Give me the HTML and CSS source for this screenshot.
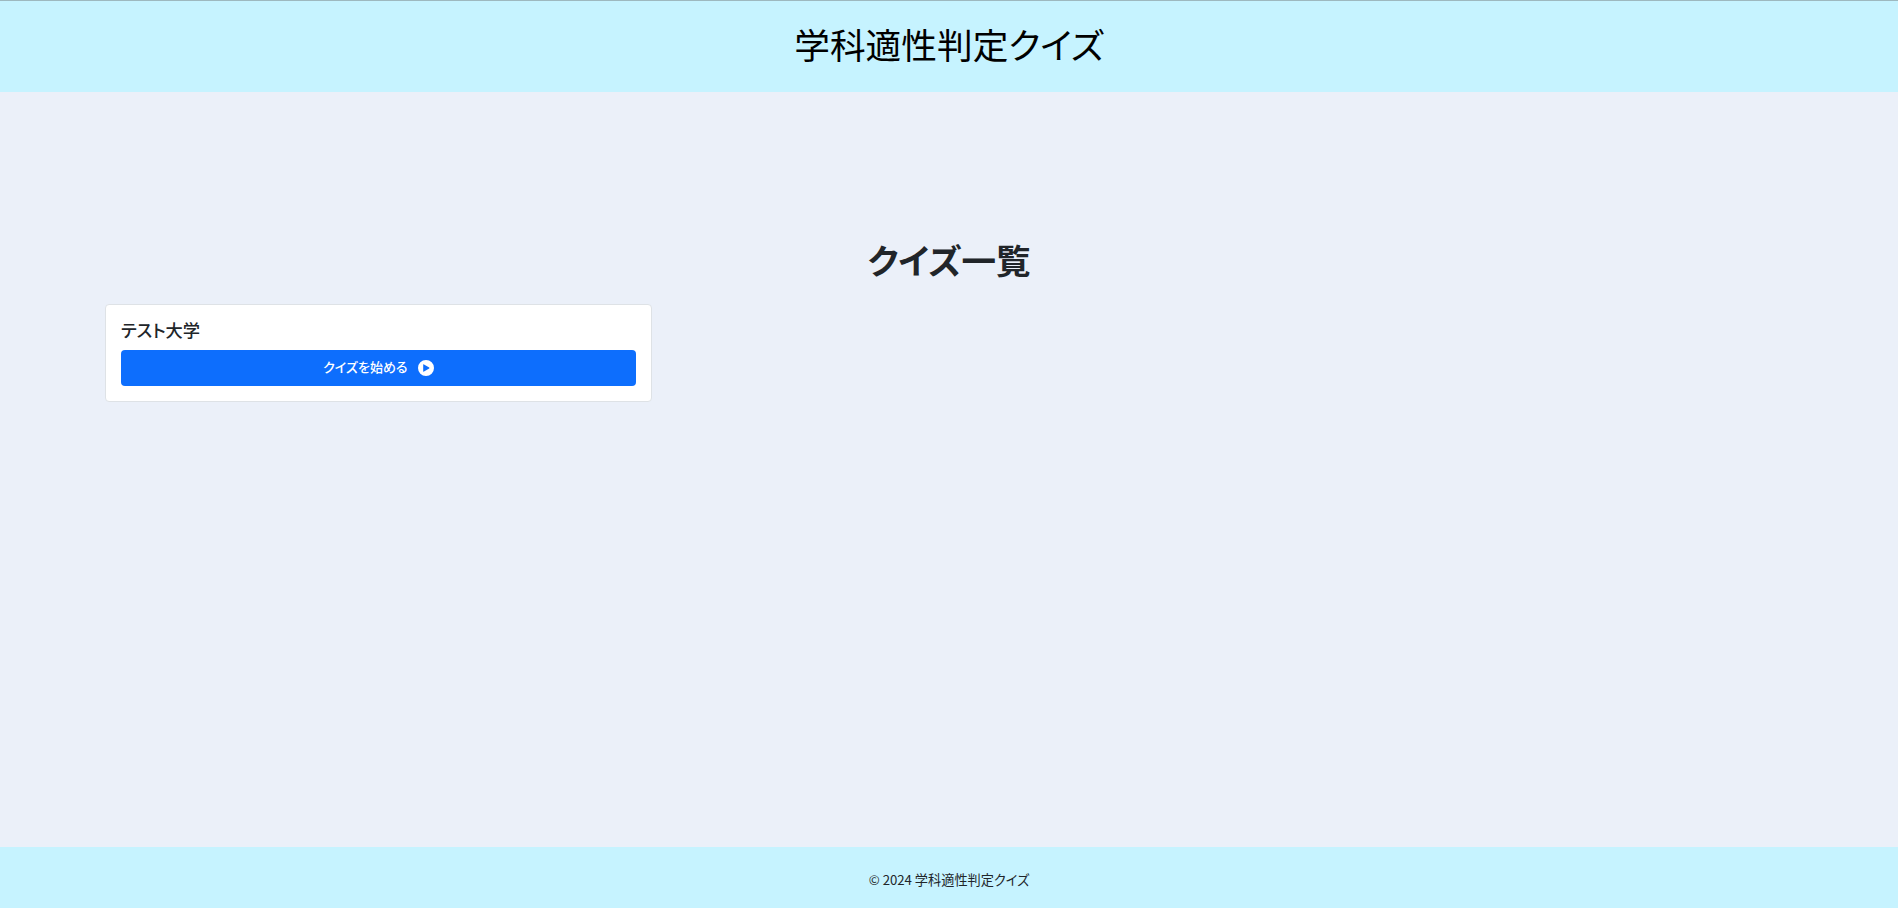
FILE: index.html
```html
<!DOCTYPE html>
<html lang="ja">

<head>
  <meta charset="UTF-8">
  <meta name="viewport" content="width=device-width, initial-scale=1.0">
  <title>学科適性判定クイズ</title>
  <link rel="stylesheet" href="styles.css">
</head>

<body>
  <header class="site-header">
    <h1 class="site-title">学科適性判定クイズ</h1>
  </header>
  <main class="content">
    <h2 class="page-title">クイズ一覧</h2>
    <div class="quiz-grid">
      <div class="quiz-card">
        <h5 class="quiz-name">テスト大学</h5>
        <a class="start-btn" href="#">
          <span class="start-label">クイズを始める</span>
          <svg class="play-icon" viewBox="0 0 16 16" width="16" height="16" fill="currentColor" fill-rule="evenodd">
            <path d="M16 8A8 8 0 1 1 0 8a8 8 0 0 1 16 0zM6 4.4a.5.5 0 0 0-.8.4v6.4a.5.5 0 0 0 .8.4l5.2-3.2a.5.5 0 0 0 0-.8z"></path>
          </svg>
        </a>
      </div>
    </div>
  </main>
  <footer class="site-footer">© 2024 学科適性判定クイズ</footer>
</body>

</html>
```

FILE: styles.css
```css
* {
  margin: 0;
  padding: 0;
  box-sizing: border-box;
}

html,
body {
  height: 100%;
}

body {
  display: flex;
  flex-direction: column;
  background-color: #ebf0f9;
  color: #212529;
  font-family: "Noto Sans CJK JP", "Liberation Sans", sans-serif;
  font-feature-settings: "palt";
  font-size: 16px;
}

.site-header {
  height: 92px;
  border-top: 1px solid #9db8bf;
  background-color: #c6f3ff;
  display: flex;
  justify-content: center;
  align-items: center;
  padding-bottom: 6px;
}

.site-title {
  color: #000;
  font-size: 35.7px;
  font-weight: 400;
  line-height: 48px;
}

.content {
  flex: 1;
  padding: 143px 93px 0;
}

.page-title {
  font-size: 34.5px;
  font-weight: 700;
  line-height: 48px;
  text-align: center;
  margin-bottom: 21px;
}

.quiz-grid {
  display: grid;
  grid-template-columns: repeat(3, 1fr);
  column-gap: 24px;
  padding: 0 12px;
}

.quiz-card {
  background-color: #fff;
  border: 1px solid #dee2e6;
  border-radius: 4px;
  padding: 15px;
}

.quiz-name {
  font-size: 17.3px;
  font-weight: 500;
  line-height: 20px;
  margin-bottom: 10px;
}

.start-btn {
  display: flex;
  justify-content: center;
  align-items: center;
  gap: 10px;
  height: 36px;
  background-color: #0d6efd;
  border-radius: 4px;
  color: #fff;
  font-size: 13px;
  font-weight: 500;
  text-decoration: none;
}

.start-label {
  margin-bottom: 3px;
}

.site-footer {
  height: 61px;
  background-color: #c6f3ff;
  display: flex;
  justify-content: center;
  align-items: center;
  padding-top: 3px;
  font-size: 13.2px;
}
```
